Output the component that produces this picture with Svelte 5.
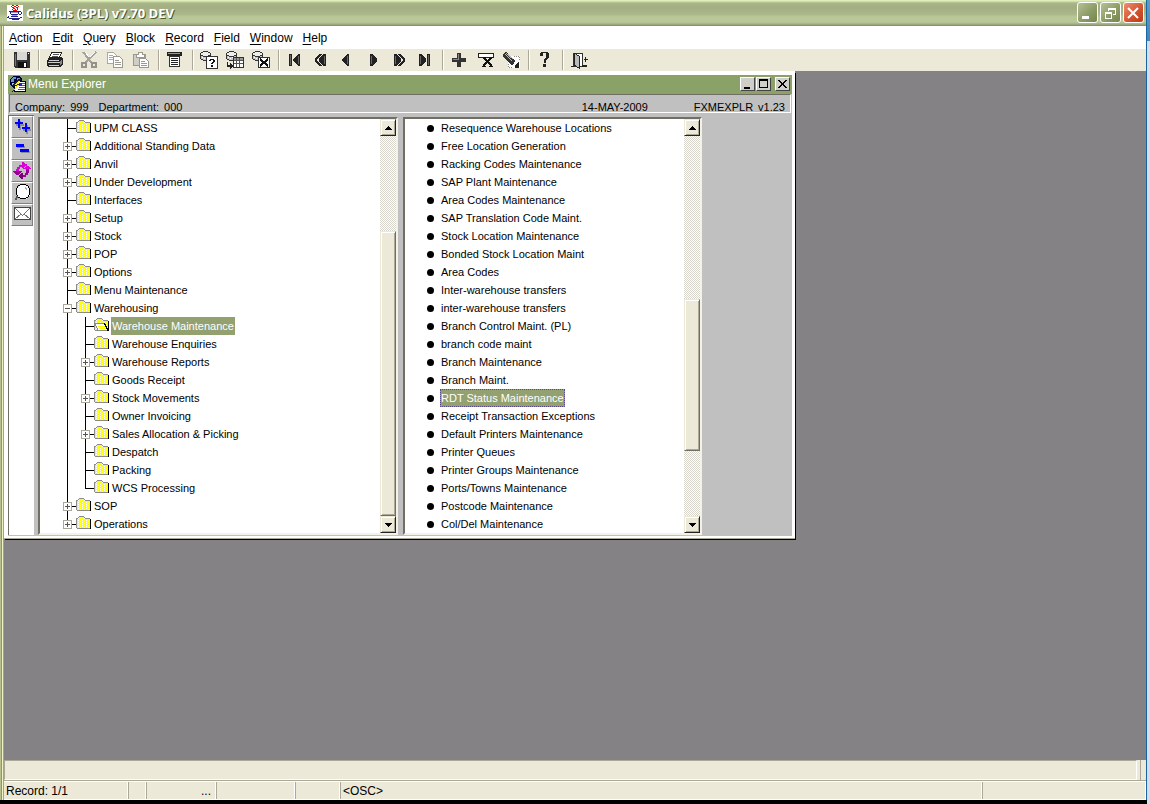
<script lang="ts">
	interface TreeNode {
		label: string;
		expandable?: boolean;
		children?: TreeNode[];
	}

	interface TreeRow {
		label: string;
		level: number;
		sign: string;
		last: boolean;
	}

	const menus = ['Action', 'Edit', 'Query', 'Block', 'Record', 'Field', 'Window', 'Help'];

	const toolGroups = [
		['Save'],
		['Print'],
		['Cut', 'Copy', 'Paste'],
		['List of values'],
		['Enter query', 'Execute query', 'Cancel query'],
		['First record', 'Previous block', 'Previous record', 'Next record', 'Next block', 'Last record'],
		['Insert record', 'Remove record', 'Clear record'],
		['Help'],
		['Exit']
	];

	const sideTools = ['Expand all', 'Collapse all', 'Refresh', 'Find', 'Mail'];

	const tree: TreeNode[] = [
		{ label: 'UPM CLASS' },
		{ label: 'Additional Standing Data', expandable: true },
		{ label: 'Anvil', expandable: true },
		{ label: 'Under Development', expandable: true },
		{ label: 'Interfaces' },
		{ label: 'Setup', expandable: true },
		{ label: 'Stock', expandable: true },
		{ label: 'POP', expandable: true },
		{ label: 'Options', expandable: true },
		{ label: 'Menu Maintenance' },
		{
			label: 'Warehousing',
			expandable: true,
			children: [
				{ label: 'Warehouse Maintenance' },
				{ label: 'Warehouse Enquiries' },
				{ label: 'Warehouse Reports', expandable: true },
				{ label: 'Goods Receipt' },
				{ label: 'Stock Movements', expandable: true },
				{ label: 'Owner Invoicing' },
				{ label: 'Sales Allocation & Picking', expandable: true },
				{ label: 'Despatch' },
				{ label: 'Packing' },
				{ label: 'WCS Processing' }
			]
		},
		{ label: 'SOP', expandable: true },
		{ label: 'Operations', expandable: true }
	];

	const programs = [
		'Resequence Warehouse Locations',
		'Free Location Generation',
		'Racking Codes Maintenance',
		'SAP Plant Maintenance',
		'Area Codes Maintenance',
		'SAP Translation Code Maint.',
		'Stock Location Maintenance',
		'Bonded Stock Location Maint',
		'Area Codes',
		'Inter-warehouse transfers',
		'inter-warehouse transfers',
		'Branch Control Maint. (PL)',
		'branch code maint',
		'Branch Maintenance',
		'Branch Maint.',
		'RDT Status Maintenance',
		'Receipt Transaction Exceptions',
		'Default Printers Maintenance',
		'Printer Queues',
		'Printer Groups Maintenance',
		'Ports/Towns Maintenance',
		'Postcode Maintenance',
		'Col/Del Maintenance'
	];

	let selectedFolder = $state('Warehouse Maintenance');
	let selectedProgram = $state('RDT Status Maintenance');

	function flatten(nodes: TreeNode[], level = 0): TreeRow[] {
		return nodes.flatMap((node, i) => [
			{
				label: node.label,
				level,
				sign: node.children ? 'minus' : node.expandable ? 'plus' : '',
				last: i === nodes.length - 1
			},
			...flatten(node.children ?? [], level + 1)
		]);
	}

	// staggered light pixels on the folder front
	function folderDots(): string {
		let d = '';
		for (let y = 5; y < 13; y++) {
			for (let x = y % 2 ? 2 : 4; x < 14; x += 4) {
				d += `M${x} ${y}h1v1h-1z`;
			}
		}
		return d;
	}

	const rows = flatten(tree);
	const dots = folderDots();
</script>

{#snippet database()}
	<path d="M1 3v6h2v1h5V8h2V3" fill="#c8c8c8" />
	<path d="M3 1h5v1h2v2H8v1H3V4H1V2h2z" fill="#eee" />
	<path d="M3 0h5v1H3zM1 1h2v1H1zM8 1h2v1H8zM0 2h1v6H0zM10 2h1v4h-1zM1 4h2v1H1zM8 4h2v1H8zM3 5h5v1H3zM1 8h2v1H1zM3 9h4v1H3z" fill="#333" />
	<path d="M2 6h1v1H2zM4 7h1v1H4zM6 6h1v1H6zM8 6h1v1H8z" fill="#fff" />
{/snippet}

{#snippet toolIcon(name: string)}
	<svg width="18" height="18" viewBox="0 0 18 18" shape-rendering="crispEdges" aria-hidden="true">
		{#if name === 'Save'}
			<path d="M1 1h16v16H2l-1-1z" fill="#333" />
			<path d="M4 1h10v8H4z" fill="#d8d8d8" />
			<path d="M5 11h9v6H5z" fill="#111" />
			<path d="M11 12h2v4h-2z" fill="#fff" />
			<path d="M15 2h1v1h-1z" fill="#fff" />
			<path d="M2 3h1v12H2z" fill="#777" />
		{:else if name === 'Print'}
			<path d="M6 1h10l-3 6H3z" fill="#fff" stroke="#222" />
			<path d="M7 3h6M6 5h6" stroke="#555" />
			<path d="M2 8l2-2h11l2 2v5l-3 3H2l-1-1v-5z" fill="#222" />
			<path d="M3 9h10M2 11h12M3 14h10" stroke="#ccc" />
			<path d="M14 10l2-2v4l-2 2z" fill="#888" />
		{:else if name === 'Cut'}
			<path d="M3 1l9 11M16 1L5 12" stroke="#a4a29a" stroke-width="2" />
			<path d="M5 1l4 5M15 1l-5 5" stroke="#fff" />
			<path d="M2 12h4v4H2zM12 12h4v4h-4z" fill="none" stroke="#94928a" stroke-width="2" />
		{:else if name === 'Copy'}
			<path d="M1.500 1.500h6l3 3v8h-9z" fill="#fff" stroke="#aaa89f" />
			<path d="M3 4.500h4M3 6.500h5M3 8.500h5" stroke="#aaa89f" />
			<path d="M7.500 5.500h6l3 3v8h-9z" fill="#fff" stroke="#9a988f" />
			<path d="M9 9.500h4M9 11.500h6M9 13.500h6" stroke="#9a988f" />
		{:else if name === 'Paste'}
			<path d="M1.500 3.500h12v11h-12z" fill="#d0cec4" stroke="#9a988f" />
			<path d="M4 3h2V1h4v2h2v3H4z" fill="#fff" stroke="#9a988f" />
			<path d="M7.500 7.500h6l3 3v6h-9z" fill="#fff" stroke="#9a988f" />
			<path d="M9 10.500h4M9 12.500h6M9 14.500h6" stroke="#9a988f" />
		{:else if name === 'List of values'}
			<path d="M1 1h15v4H1z" fill="#222" />
			<path d="M2 2h12v1H2z" fill="#999" />
			<path d="M3.500 5.500h10v10h-10z" fill="#fff" stroke="#333" />
			<path d="M5 7.500h7M5 9.500h7M5 11.500h7M5 13.500h7" stroke="#222" />
		{:else if name === 'Enter query'}
			{@render database()}
			<path d="M6.500 5.500h11v12h-11z" fill="#fff" stroke="#333" />
			<path d="M10 8h4v1h-4zM9 9h2v1H9zM13 9h2v2h-2zM12 11h2v1h-2zM11 12h2v1h-2zM11 14h2v2h-2z" fill="#111" />
		{:else if name === 'Execute query'}
			{@render database()}
			<path d="M7.500 6.500h10v10h-10z" fill="#fff" stroke="#333" />
			<path d="M8 7h9v2H8z" fill="#999" />
			<path d="M8 9h9v1H8zM8 12h9v1H8zM10 7h1v9h-1zM13 7h1v9h-1z" fill="#555" />
			<path d="M1 11h1v3h2v-2l3 3-3 3v-2H1z" fill="#222" />
		{:else if name === 'Cancel query'}
			{@render database()}
			<path d="M6.500 6.500h11v10h-11z" fill="#fff" stroke="#333" />
			<path d="M8 8l8 7M16 8l-8 7" stroke="#111" stroke-width="2" />
		{:else if name === 'First record'}
			<path d="M3 3h3v12H3z" fill="#222" />
			<path d="M14 3v12h-2L7 10V8l5-5z" fill="#222" />
			<path d="M4 4h1v10H4zM12 5h1v8h-1z" fill="#666" />
		{:else if name === 'Previous block'}
			<path d="M7 3h3L5 9l5 6H7L3 10V8z" fill="#222" />
			<path d="M11 3h3v12h-3L7 10V8z" fill="#222" />
			<path d="M12 5h1v8h-1z" fill="#666" />
		{:else if name === 'Previous record'}
			<path d="M11 3v12H9l-5-5V8l5-5z" fill="#222" />
			<path d="M9 5h1v8H9z" fill="#666" />
		{:else if name === 'Next record'}
			<path d="M6 3v12h2l5-5V8L8 3z" fill="#222" />
			<path d="M7 5h1v8H7z" fill="#666" />
		{:else if name === 'Next block'}
			<path d="M11 3H8l5 6-5 6h3l4-5V8z" fill="#222" />
			<path d="M7 3H4v12h3l4-5V8z" fill="#222" />
			<path d="M5 5h1v8H5z" fill="#666" />
		{:else if name === 'Last record'}
			<path d="M11 3h3v12h-3z" fill="#222" />
			<path d="M3 3v12h2l5-5V8L5 3z" fill="#222" />
			<path d="M12 4h1v10h-1zM4 5h1v8H4z" fill="#666" />
		{:else if name === 'Insert record'}
			<path d="M7 2h4v5h5v4h-5v5H7v-5H2V7h5z" fill="#333" />
			<path d="M8 3v5H3" fill="none" stroke="#888" />
		{:else if name === 'Remove record'}
			<path d="M2.500 2.500h15v4h-15z" fill="#fff" stroke="#222" />
			<path d="M8 7l8 8M15 7l-8 8" stroke="#111" stroke-width="2" />
			<path d="M6 15h4v1H6zM13 15h4v1h-4zM7 6h3v1H7zM14 6h3v1h-3z" fill="#111" />
		{:else if name === 'Clear record'}
			<path d="M6 5h12v12H6z" fill="#fff" />
			<path d="M12 5h5v5M6 13v3h5" fill="none" stroke="#888" stroke-dasharray="1 1" />
			<path d="M1 3l3-2 9 8-1 4-3 1-8-9z" fill="#333" />
			<path d="M3 3l7 7M4 2l7 6" stroke="#bbb" />
			<path d="M13 14l4-3v6h-4z" fill="#222" />
		{:else if name === 'Help'}
			<path d="M5 1h7v1H5zM4 2h3v3H4zM10 2h3v5h-3zM9 7h3v1H9zM8 8h3v1H8zM8 9h2v3H8zM7 13h3v3H7z" fill="#222" />
		{:else if name === 'Exit'}
			<path d="M3.500 2.500h9v13h-9z" fill="#fff" stroke="#333" />
			<path d="M4 2l5 3v12l-5-3z" fill="#bbb" stroke="#222" />
			<path d="M1 15h3v1H1zM12 14h5v2h-5z" fill="#222" />
			<path d="M15 6h1v2h2v1h-2v2h-1V9h-1V8h1z" fill="#222" />
		{/if}
	</svg>
{/snippet}

{#snippet sideIcon(name: string)}
	<svg width="18" height="18" viewBox="0 0 18 18" shape-rendering="crispEdges" aria-hidden="true">
		{#if name === 'Expand all'}
			<path d="M6 3h2v9H6zM3 6h8v2H3zM13 7h2v9h-2zM10 11h8v2h-8z" fill="#8a8a9a" />
			<path d="M5 1h2v9H5zM2 4h8v2H2zM12 5h2v9h-2zM9 9h8v2H9z" fill="#00f" />
		{:else if name === 'Collapse all'}
			<path d="M4 6h8v2H4zM8 11h9v2H8z" fill="#8a8a9a" />
			<path d="M3 4h8v3H3zM7 9h9v3H7z" fill="#00f" />
		{:else if name === 'Refresh'}
			<path d="M3 12V7h1V5h2V3h4v2H7v2H6v5z" fill="#d0d" />
			<path d="M0 9h9v1H8v1H7v1H6v1H3v-1H2v-1H1v-1H0z" fill="#909" />
			<path d="M9 0h2v1h1v1h2v2h-2v1h-1v1H9z" fill="#d0d" />
			<path d="M16 6v5h-1v2h-2v2H9v-2h3v-2h1V6z" fill="#909" />
			<path d="M10 7h8V6h-1V5h-1V4h-3v1h-1v1h-2z" fill="#d0d" />
			<path d="M10 17H8v-1H7v-1H6v-2h1v-1h1v-1h2z" fill="#707" />
		{:else if name === 'Find'}
			<path d="M7 1h6l4 4v6l-4 4H7l-4-4V5z" fill="#fff" />
			<path d="M7 0h6v1H7zM5 1h2v1H5zM13 1h2v1h-2zM4 2h1v2H4zM15 2h1v2h-1zM3 4h1v7H3zM16 4h1v7h-1zM4 11h1v2H4zM15 11h1v2h-1zM5 13h2v1H5zM13 13h2v1h-2zM7 14h6v1H7z" fill="#000" />
			<path d="M12 3h1v1h1v2h-1V5h-1z" fill="#aaa" />
			<path d="M3 12h2v2H4v2H2v-2h1z" fill="#555" />
		{:else if name === 'Mail'}
			<path d="M1.500 1.500h16v12h-16z" fill="#fff" stroke="#444" />
			<path d="M2 2l7 7h1l7-7M2 13l6-5M17 13l-6-5" fill="none" stroke="#777" />
		{/if}
	</svg>
{/snippet}

{#snippet folder(open: boolean)}
	<svg width="18" height="18" viewBox="0 0 18 18" shape-rendering="crispEdges" aria-hidden="true">
		<path d="M2 14h13V4h-1v9H2z" fill="#000" />
		<path d="M1 4h2V2h5v2h6v9H1z" fill="#ff0" />
		<path d={dots} fill="#fff" />
		<path d="M3 1h5v1H3zM2 2h1v1H2zM8 2h1v1H8zM9 3h5v1H9zM0 3h2v1H0zM0 4h1v9H0zM1 13h13v1H1z" fill="#8c8c84" />
		{#if open}
			<path d="M1 7h9l1 1 2 5H4L3 11z" fill="#fff" />
			<path d="M0 6h10v1H0zM1 7h1v2H1zM2 9h1v2H2zM3 11h1v2H3z" fill="#8c8c84" />
			<path d="M10 6h1v1h1v2h1v2h1v2h1v1h-2v-2h-1v-2h-1V8h-1z" fill="#000" />
			<path d="M4 9h7v1H4zM5 11h7v1H5z" fill="#ff0" />
		{/if}
	</svg>
{/snippet}

{#snippet scrollbar(start: number, size: number)}
	<div class="scrollbar">
		<button class="scroll-button" aria-label="Scroll up">
			<svg width="7" height="4" viewBox="0 0 7 4" shape-rendering="crispEdges"><path d="M3 0h1v1h1v1h1v1h1v1H0V3h1V2h1V1h1z" /></svg>
		</button>
		<div class="track">
			<div class="thumb" style="top: {start}%; height: {size}%"></div>
		</div>
		<button class="scroll-button" aria-label="Scroll down">
			<svg width="7" height="4" viewBox="0 0 7 4" shape-rendering="crispEdges"><path d="M0 0h7v1H6v1H5v1H4v1H3V3H2V2H1V1H0z" /></svg>
		</button>
	</div>
{/snippet}

<div class="desktop">
	<div class="app-window">
		<header class="title-bar">
			<svg width="16" height="16" viewBox="0 0 16 16" shape-rendering="crispEdges" aria-hidden="true">
				<path d="M0 0h16v16H0z" fill="#fff" />
				<path d="M5 0h2v1H5zM9 0h2v1H9zM4 1h1v1H4zM7 1h2v1H7zM11 1h1v1h-1zM5 2h2v1H5zM9 2h2v1H9zM6 3h2v1H6zM10 3h1v2h-1zM5 4h1v1H5zM8 4h1v1H8zM6 5h4v1H6z" fill="#e00" />
				<path d="M2 6h10v1H2zM3 7h1v2H3zM4 9h7v1H4zM11 7h1v2h-1zM12 6h2v1h-2zM14 7h1v2h-1zM12 9h2v1h-2zM4 11h7v1H4zM1 11h1v1H1zM2 13h11v1H2zM5 14h7v1H5zM13 12h2v1h-2zM0 12h2v1H0z" fill="#228" />
				<path d="M4 7h7v1H4zM5 10h5v1H5z" fill="#99c" />
			</svg>
			<h1>Calidus (3PL) v7.70 DEV</h1>
			<div class="window-buttons">
				<button aria-label="Minimise">
					<svg width="18" height="18" viewBox="0 0 18 18" shape-rendering="crispEdges"><path d="M4 12h7v3H4z" fill="#fff" /></svg>
				</button>
				<button aria-label="Restore">
					<svg width="18" height="18" viewBox="0 0 18 18" shape-rendering="crispEdges">
						<path d="M7 4h8v7h-3v-1h2V6H8v1H7zM4 8h7v7H4zM5 10v4h5v-4z" fill="#fff" fill-rule="evenodd" />
					</svg>
				</button>
				<button class="close" aria-label="Close">
					<svg width="18" height="18" viewBox="0 0 18 18"><path d="M4 4l10 10M14 4L4 14" stroke="#fff" stroke-width="2" /></svg>
				</button>
			</div>
		</header>

		<div class="app-body">
			<nav class="menu-bar">
				{#each menus as menu}
					<button><u>{menu[0]}</u>{menu.slice(1)}</button>
				{/each}
			</nav>

			<div class="tool-bar" role="toolbar" aria-label="Main toolbar">
				{#each toolGroups as group}
					<div class="tool-group">
						{#each group as tool}
							<button aria-label={tool}>{@render toolIcon(tool)}</button>
						{/each}
					</div>
				{/each}
			</div>

			<main class="workspace">
				<section class="explorer">
					<div class="explorer-title">
						<svg width="18" height="18" viewBox="0 0 18 18" shape-rendering="crispEdges" aria-hidden="true">
							<path d="M4 1h6l3 3v6l-3 3H4L1 10V4z" fill="#004" />
							<path d="M4 2h3v2H5v3H2V4zM8 3h3v3H8z" fill="#6a9ac0" />
							<path d="M3 8h3v3H4z" fill="#8fd0d0" />
							<path d="M5.500 6.500h11v10h-11z" fill="#fff" stroke="#003" />
							<path d="M10 8h3v3h-3z" fill="#22c" />
							<path d="M13 8h3v1h-3zM13 10h3v1h-3zM10 12h6v1h-6zM9 14h7v1H9z" fill="#d22" />
							<path d="M9 4l-6 7h4l-4 6 8-8H8l4-5z" fill="#220" />
							<path d="M9 6l-4 4h3l-3 5 5-5H7l4-4z" fill="#fe0" />
						</svg>
						<h2>Menu Explorer</h2>
						<div class="inner-buttons">
							<button aria-label="Minimise explorer">
								<svg width="11" height="10" viewBox="0 0 11 10" shape-rendering="crispEdges"><path d="M2 8h6v2H2z" /></svg>
							</button>
							<button aria-label="Maximise explorer">
								<svg width="11" height="10" viewBox="0 0 11 10" shape-rendering="crispEdges"><path d="M1 0h9v9H1zM2 2v6h7V2z" fill-rule="evenodd" /></svg>
							</button>
							<button class="inner-close" aria-label="Close explorer">
								<svg width="11" height="10" viewBox="0 0 11 10" shape-rendering="crispEdges"><path d="M1 1h2v1h1v1h1v1h1V3h1V2h1V1h2v1H9v1H8v1H7v2h1v1h1v1h1v1H8V8H7V7H6V6H5v1H4v1H3v1H1V8h1V7h1V6h1V4H3V3H2V2H1z" /></svg>
							</button>
						</div>
					</div>

					<div class="context">
						<span>Company:</span>
						<span class="value">999</span>
						<span class="department">Department:</span>
						<span class="value">000</span>
						<span class="date">14-MAY-2009</span>
						<span class="program">FXMEXPLR</span>
						<span class="version">v1.23</span>
					</div>

					<div class="panes">
						<div class="side-tools">
							{#each sideTools as tool}
								<button aria-label={tool}>{@render sideIcon(tool)}</button>
							{/each}
						</div>

						<div class="pane tree-pane">
							<ul class="tree">
								{#each rows as row}
									<li>
										{#if row.level > 0}
											<span class="guide"></span>
										{/if}
										<span class="guide branch" class:last={row.last}>
											{#if row.sign}
												<button class="expander" aria-label="Toggle {row.label}">
													<svg width="9" height="9" viewBox="0 0 9 9" shape-rendering="crispEdges">
														<path d="M0.500 0.500h8v8h-8z" fill="#fff" stroke="#aca899" />
														<path d={row.sign === 'plus' ? 'M2 4h5v1H2zM4 2h1v5H4z' : 'M2 4h5v1H2z'} fill="#555" />
													</svg>
												</button>
											{/if}
										</span>
										{@render folder(row.label === selectedFolder)}
										<button
											class="label"
											class:selected={row.label === selectedFolder}
											onclick={() => (selectedFolder = row.label)}>{row.label}</button
										>
									</li>
								{/each}
							</ul>
							{@render scrollbar(25, 75)}
						</div>

						<div class="pane list-pane">
							<ul class="programs">
								{#each programs as program}
									<li>
										<button
											class="label"
											class:selected={program === selectedProgram}
											onclick={() => (selectedProgram = program)}>{program}</button
										>
									</li>
								{/each}
							</ul>
							{@render scrollbar(43, 40)}
						</div>
					</div>
				</section>
			</main>

			<div class="message-line"><div class="message"></div></div>
			<footer class="status-line">
				<span class="record">Record: 1/1</span>
				<span class="flag"></span>
				<span class="more">...</span>
				<span class="mode"></span>
				<span class="lamp"></span>
				<span class="osc">&lt;OSC&gt;</span>
				<span class="tail"></span>
			</footer>
		</div>
	</div>
</div>

<style>
	:global(body) {
		margin: 0;
	}

	.desktop {
		box-sizing: border-box;
		height: 100vh;
		min-height: 620px;
		padding: 0 3px 4px 0;
		background:
			linear-gradient(#5f9cc4, #3b8abc 41px, #d3ddf0 41px) right / 3px 100% no-repeat,
			#000;
		font-family: 'Liberation Sans', Arial, sans-serif;
		font-size: 12px;
		color: #000;
	}

	button {
		font: inherit;
		color: inherit;
		padding: 0;
		margin: 0;
		border: 0;
		background: none;
	}

	svg {
		display: block;
		flex-shrink: 0;
	}

	h1,
	h2 {
		margin: 0;
	}

	ul {
		list-style: none;
		margin: 0;
		padding: 0;
	}

	.app-window {
		height: 100%;
		display: flex;
		flex-direction: column;
		border-right: 1px solid #1a64a0;
		box-sizing: border-box;
	}

	.title-bar {
		box-sizing: border-box;
		height: 26px;
		display: flex;
		align-items: center;
		gap: 3px;
		padding: 0 2px 1px 7px;
		background: linear-gradient(
			#e3f2bd 0,
			#dceab5 1px,
			#a9b688 3px,
			#a3ae82 7px,
			#aab78a 14px,
			#bac899 17px,
			#bac899 22px,
			#a3b184 24px,
			#7f8c62 26px
		);
	}

	.title-bar h1 {
		flex: 1;
		font: bold 13px/20px 'Open Sans', sans-serif;
		color: #fff;
		text-shadow: 1px 1px 0 #4f5a34;
	}

	.window-buttons {
		display: flex;
		gap: 2px;
	}

	.window-buttons button {
		width: 21px;
		height: 21px;
		box-sizing: border-box;
		border: 1px solid #fff;
		border-radius: 3px;
		background: linear-gradient(135deg, #b4c095, #8a9a62 60%, #75854f);
	}

	.window-buttons .close {
		background: linear-gradient(135deg, #ee9070, #d4502c 60%, #b83c18);
	}

	.app-body {
		flex: 1;
		min-height: 0;
		display: flex;
		flex-direction: column;
		border-left: 4px solid #a4ad7e;
		border-image: linear-gradient(90deg, #b8c090 1px, #8c9868 1px, #8c9868 2px, #f2f4c8 2px, #f2f4c8 3px, #9ea67a 3px) 0 0 0 4;
	}

	.menu-bar {
		display: flex;
		align-items: center;
		gap: 10px;
		height: 23px;
		padding-left: 5px;
		background: #fff;
	}

	.menu-bar u {
		text-underline-offset: 2px;
	}

	.tool-bar {
		display: flex;
		align-items: center;
		height: 22px;
		padding-left: 5px;
		background: #ece9d8;
	}

	.tool-group {
		display: flex;
	}

	.tool-group + .tool-group {
		margin-left: 3px;
		padding-left: 3px;
		border-left: 1px solid #aca899;
		box-shadow: inset 1px 0 #fff;
		border-right: 1px solid transparent;
	}

	.tool-group button {
		width: 26px;
		height: 20px;
		display: grid;
		place-items: center;
	}

	.workspace {
		flex: 1;
		min-height: 0;
		overflow: hidden;
		background: #848284;
	}

	.explorer {
		box-sizing: border-box;
		width: 791px;
		max-width: 100%;
		border: 4px solid #fff;
		border-right-width: 3px;
		border-bottom-width: 2px;
		box-shadow: 0 1px #aca899, 1px 2px #000;
		background: #c0c0c0;
	}

	.explorer-title {
		box-sizing: border-box;
		display: flex;
		align-items: center;
		height: 19px;
		padding: 0 2px 2px 1px;
		gap: 1px;
		background: #8aa168;
		color: #fff;
	}

	.explorer-title h2 {
		flex: 1;
		font-size: 12px;
		font-weight: normal;
	}

	.inner-buttons {
		display: flex;
		gap: 1px;
		color: #000;
	}

	.inner-buttons button {
		box-sizing: border-box;
		width: 15px;
		height: 14px;
		border: 1px solid;
		border-color: #fff #444 #444 #fff;
		background: #d0cec8;
		padding: 1px;
	}

	.inner-buttons .inner-close {
		margin-left: 3px;
	}

	.context {
		box-sizing: border-box;
		display: flex;
		align-items: flex-end;
		height: 19px;
		margin: 0 1px;
		padding: 0 5px;
		border: 1px solid;
		border-color: #716f64 #fff #fff #716f64;
		font-size: 11px;
		line-height: 10px;
	}

	.context .value {
		margin-left: 5px;
	}

	.context .department {
		margin-left: 10px;
	}

	.context .date {
		margin-left: auto;
		margin-right: 46px;
	}

	.context .version {
		margin-left: 5px;
	}

	.panes {
		display: flex;
		align-items: flex-start;
		border-bottom: 1px solid #c0c0c0;
	}

	.side-tools {
		align-self: stretch;
		display: flex;
		flex-direction: column;
		margin: 2px 4px 0 0;
		padding: 0 1px 0 2px;
		width: 22px;
		border-top: 1px solid #716f64;
		border-left: 1px solid #716f64;
		background: #fff;
	}

	.side-tools button {
		box-sizing: border-box;
		height: 22px;
		display: grid;
		place-items: center;
		border: 1px solid;
		border-color: #fff #808080 #808080 #fff;
		background: #c0c0c0;
	}

	.pane {
		display: flex;
		margin-top: 4px;
		border: 2px solid;
		border-color: #716f64 #f4f2e6 #f4f2e6 #716f64;
		background: #fff;
		font-size: 11px;
		line-height: 18px;
	}

	.tree-pane {
		width: 356px;
	}

	.list-pane {
		width: 295px;
		margin-left: 5px;
	}

	.tree {
		flex: 1;
		padding-left: 18px;
	}

	.tree li {
		display: flex;
		height: 18px;
	}

	.guide {
		width: 18px;
		height: 18px;
		flex-shrink: 0;
		background: linear-gradient(#000, #000) 9px 0 / 1px 100% no-repeat;
	}

	.branch {
		display: grid;
		place-items: center;
		background:
			linear-gradient(#000, #000) 9px 0 / 1px 100% no-repeat,
			linear-gradient(#000, #000) 9px 9px / 9px 1px no-repeat;
	}

	.branch.last {
		background-size: 1px 9px, 9px 1px;
	}

	.label {
		height: 18px;
		white-space: nowrap;
	}

	.tree .label {
		margin-left: -1px;
		padding: 0 1px;
	}

	.selected {
		background: #93a070;
		color: #fff;
	}

	.programs {
		flex: 1;
		padding-left: 22px;
	}

	.programs li {
		display: flex;
		align-items: center;
		gap: 6px;
		height: 18px;
	}

	.programs li::before {
		content: '';
		width: 7px;
		height: 7px;
		border-radius: 50%;
		background: #000;
	}

	.programs .label {
		padding: 0 1px;
	}

	.programs .selected {
		outline: 1px dotted #5a4a8a;
		outline-offset: -1px;
	}

	.scrollbar {
		width: 16px;
		display: flex;
		flex-direction: column;
		background: repeating-conic-gradient(#d8d5cc 0 25%, #fff 0 50%) 0 0 / 2px 2px;
	}

	.scroll-button {
		box-sizing: border-box;
		height: 17px;
		display: grid;
		place-items: center;
		border: 1px solid;
		border-color: #ece9d8 #222 #222 #ece9d8;
		box-shadow: inset 1px 1px #fff, inset -1px -1px #aca899;
		background: #ece9d8;
	}

	.track {
		flex: 1;
		position: relative;
	}

	.thumb {
		position: absolute;
		left: 0;
		width: 100%;
		box-sizing: border-box;
		border: 1px solid;
		border-color: #ece9d8 #716f64 #716f64 #ece9d8;
		box-shadow: inset 1px 1px #fff, inset -1px -1px #aca899;
		background: #ece9d8;
	}

	.message-line {
		height: 20px;
		padding-right: 5px;
		border-bottom: 1px solid #aca899;
		background: #ece9d8;
	}

	.message {
		box-sizing: border-box;
		height: 20px;
		margin-right: 4px;
		border: 1px solid;
		border-color: #aca899 #fff #fff #aca899;
		box-shadow: 3px 0 #ece9d8, 4px 0 #aca899;
	}

	.status-line {
		display: flex;
		height: 17px;
		border-top: 1px solid #fff;
		border-bottom: 1px solid #fff;
		background: #ece9d8;
		line-height: 18px;
	}

	.status-line span {
		box-sizing: border-box;
		border-left: 1px solid #aca899;
		border-right: 1px solid #fff;
		padding-left: 2px;
	}

	.status-line .record {
		width: 124px;
		border-left: 0;
	}

	.status-line .flag {
		width: 18px;
	}

	.status-line .more {
		width: 70px;
		padding-right: 4px;
		text-align: right;
	}

	.status-line .mode {
		width: 79px;
	}

	.status-line .lamp {
		width: 45px;
	}

	.status-line .osc {
		flex: 1;
	}

	.status-line .tail {
		width: 164px;
	}
</style>
